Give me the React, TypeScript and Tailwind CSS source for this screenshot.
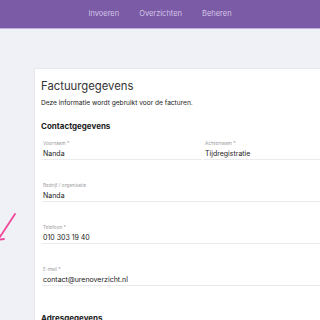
export default function App() {
  const font = { fontFamily: "Inter, 'Liberation Sans', sans-serif" };
  return (
    <div className="w-[320px] h-[320px] overflow-hidden bg-[#f0f1f6] relative" style={font}>
      {/* Top nav */}
      <div className="h-[29px] bg-[#7b5aa6] border-b border-[#c3aee0] flex items-center justify-center gap-[20px] text-[7.5px] text-[#d4c6e8]">
        <span>Invoeren</span>
        <span>Overzichten</span>
        <span>Beheren</span>
      </div>

      {/* Pink arrow overlay */}
      <svg className="absolute left-0 top-[208px]" width="20" height="40" viewBox="0 0 20 40">
        <path d="M15 6 L-2 32 M-2 32 L1 27 M-2 32 L4 31" stroke="#f0479a" strokeWidth="1.8" fill="none" strokeLinecap="round" />
      </svg>

      {/* Card */}
      <div className="ml-[34px] mt-[39px] w-[320px] bg-white border border-[#e6e7ec] pl-[6px] pt-[10px]">
        <h1 className="text-[11.3px] text-[#333] leading-[14px]">Factuurgegevens</h1>
        <p className="mt-[6px] text-[6.6px] text-[#222] leading-[9px]">
          Deze informatie wordt gebruikt voor de facturen.
        </p>
        <h2 className="mt-[13px] text-[8px] font-bold text-[#222] leading-[10px]">Contactgegevens</h2>

        <div className="mt-[9px] pl-[1px] flex flex-col gap-[22px]">
          <div className="grid grid-cols-[160px_1fr] gap-[2px]">
            <Field label="Voornaam *" value="Nanda" />
            <Field label="Achternaam *" value="Tijdregistratie" />
          </div>
          <Field label="Bedrijf / organisatie" value="Nanda" />
          <Field label="Telefoon *" value="010 303 19 40" />
          <Field label="E-mail *" value="contact@urenoverzicht.nl" />
        </div>

        <h2 className="mt-[27px] text-[8px] font-bold text-[#222] leading-[10px]">Adresgegevens</h2>
      </div>
    </div>
  );
}

function Field({ label, value }: { label: string; value: string }) {
  return (
    <div className="border-b border-[#ebebef]">
      <div className="text-[4.7px] text-[#9a9a9a] leading-[6px] pl-[1px]">{label}</div>
      <div className="mt-[3px] text-[7px] text-[#222] leading-[10px] pl-[1px]">{value}</div>
    </div>
  );
}
